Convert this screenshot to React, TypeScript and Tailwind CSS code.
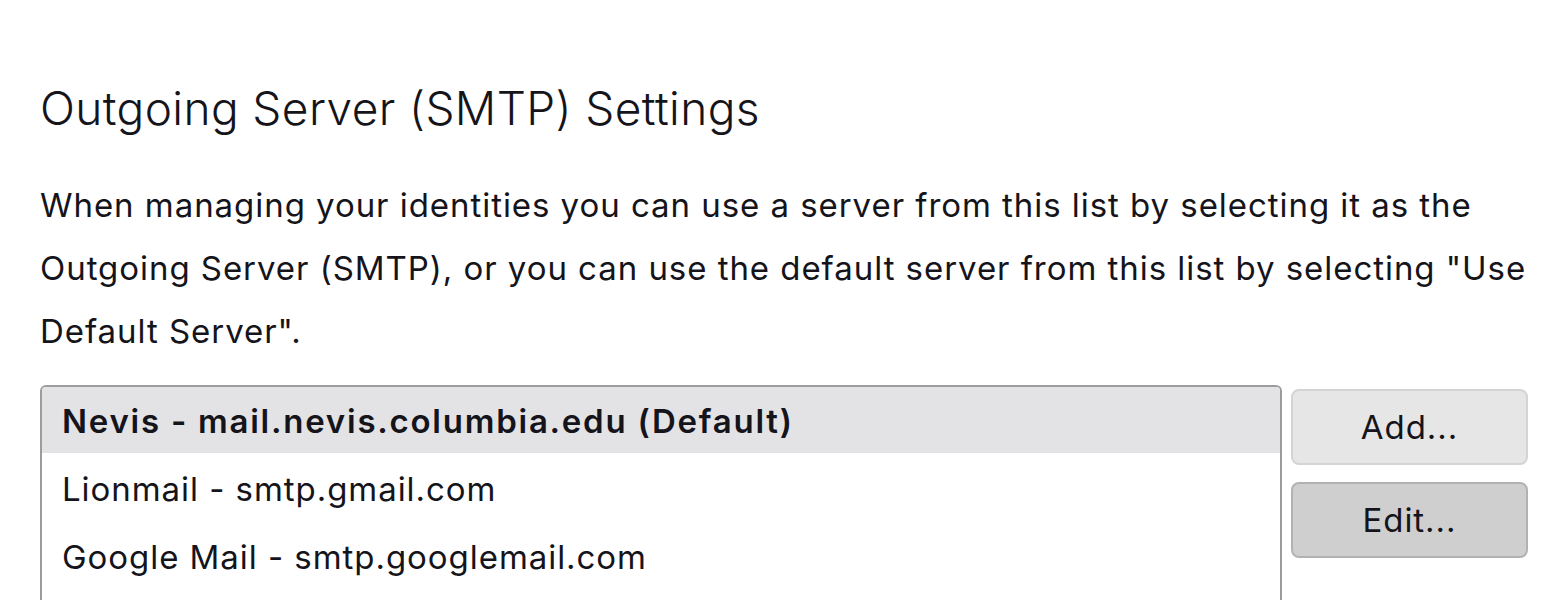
export default function App() {
  const servers = [
    { name: "Nevis - mail.nevis.columbia.edu (Default)", selected: true },
    { name: "Lionmail - smtp.gmail.com" },
    { name: "Google Mail - smtp.googlemail.com" },
  ];

  return (
    <div className="h-[600px] overflow-hidden bg-white pl-10 pr-7 pt-[76px] text-[#15141a] [font-family:Inter,'Liberation_Sans',sans-serif]">
      <h1 className="text-[46px] leading-[64px] font-light tracking-[0.4px]">
        Outgoing Server (SMTP) Settings
      </h1>

      <p className="mt-[34px] text-[33px] leading-[63px] tracking-[0.95px]">
        When managing your identities you can use a server from this list by selecting it as the
        Outgoing Server (SMTP), or you can use the default server from this list by selecting "Use
        Default Server".
      </p>

      <div className="mt-[22px] flex gap-[9px]">
        {/* list keeps going below the fold */}
        <div className="h-[260px] w-[1242px] shrink-0 overflow-hidden rounded-[6px] border-2 border-[#9c9c9c]">
          {servers.map((s) => (
            <div
              key={s.name}
              className={
                s.selected
                  ? "flex h-[66px] items-center bg-[#e3e3e6] px-5 pt-[4px] text-[33px] font-semibold tracking-[1.75px]"
                  : "flex h-[68px] items-center px-5 pt-[5px] text-[33px] tracking-[0.95px]"
              }
            >
              {s.name}
            </div>
          ))}
        </div>

        <div className="flex flex-col gap-[17px] pt-[4px]">
          <button className="h-[76px] w-[237px] rounded-[8px] border-2 border-[#d4d4d4] bg-[#e6e6e6] pt-[2px] text-[33px] tracking-[0.95px]">
            Add...
          </button>
          <button className="h-[76px] w-[237px] rounded-[8px] border-2 border-[#b2b2b2] bg-[#cfcfcf] pt-[2px] text-[33px] tracking-[0.95px]">
            Edit...
          </button>
        </div>
      </div>
    </div>
  );
}
